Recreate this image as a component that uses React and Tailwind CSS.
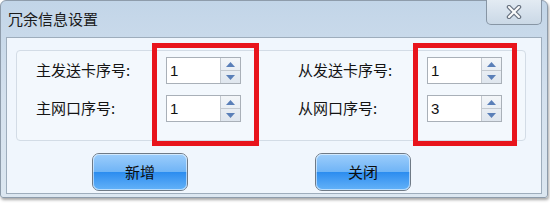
import React from 'react';

function SpinBox({ value }) {
  return (
    <div className="flex h-[27px] w-[75px] border border-[#a9b0b8] bg-white">
      <div
        className="flex-1 pl-[3px] text-[15px] leading-[25px] text-[#111]"
        style={{ fontFamily: '"Liberation Sans", sans-serif' }}
      >
        {value}
      </div>
      <div className="flex w-[20px] flex-col border-l border-[#c3c9d0] bg-gradient-to-b from-[#f3f6f9] to-[#dfe6ee]">
        <div className="flex flex-1 items-center justify-center border-b border-[#c3c9d0]">
          <svg width="9" height="5" viewBox="0 0 9 5">
            <path d="M0 5 L4.5 0 L9 5 Z" fill="#5a7fb8" />
          </svg>
        </div>
        <div className="flex flex-1 items-center justify-center">
          <svg width="9" height="5" viewBox="0 0 9 5">
            <path d="M0 0 L4.5 5 L9 0 Z" fill="#5a7fb8" />
          </svg>
        </div>
      </div>
    </div>
  );
}

function AeroButton({ children }) {
  return (
    <button className="relative h-[38px] w-[96px] overflow-hidden rounded-[7px] border-[1.5px] border-[#6f7a86] text-[15px] text-[#0d0d0d]">
      <span className="absolute inset-x-0 top-0 h-1/2 bg-gradient-to-b from-[#9ccdfb] to-[#6fb4f6]" />
      <span className="absolute inset-x-0 bottom-0 h-1/2 bg-gradient-to-b from-[#2a8cef] to-[#63b2f8]" />
      <span className="absolute inset-0 rounded-[6px] shadow-[inset_0_0_0_1px_rgba(255,255,255,0.55)]" />
      <span className="relative z-10">{children}</span>
    </button>
  );
}

export default function App() {
  return (
    <div
      className="relative h-[216px] w-[550px] overflow-hidden bg-white"
      style={{ fontFamily: '"Noto Sans CJK SC", "Noto Sans", sans-serif' }}
    >
      {/* window frame */}
      <div className="relative flex h-[198px] w-[548px] flex-col rounded-t-[6px] rounded-b-[3px] border border-[#8e9cab] bg-gradient-to-b from-[#c2d5e8] via-[#d4e1ee] to-[#dce7f1] shadow-[1px_2px_3px_rgba(0,0,0,0.35)]">
        {/* title bar */}
        <div className="flex h-[36px] items-center pl-[7px] text-[15px] text-[#1b1b1b]">冗余信息设置</div>

        <div className="absolute right-[5px] top-[-1px] flex h-[25px] w-[56px] items-center justify-center rounded-b-[5px] border border-t-0 border-[#8795a4] bg-gradient-to-b from-[#e3ebf3] to-[#cad8e6]">
          <svg width="16" height="14" viewBox="0 0 16 14">
            <path d="M3 2 L13 12 M13 2 L3 12" stroke="#6a7482" strokeWidth="4.5" strokeLinecap="round" />
            <path d="M3 2 L13 12 M13 2 L3 12" stroke="#fdfdfd" strokeWidth="2" strokeLinecap="round" />
          </svg>
        </div>

        {/* client area */}
        <div className="mx-[5px] flex h-[157px] flex-col border border-[#9eadbc] bg-[#f0f6fd] pl-[9px] pr-[15px] pt-[12px]">
          {/* group box */}
          <div className="flex h-[91px] flex-col gap-[11px] rounded-[4px] border border-[#d3dce6] bg-[#f3f8fd] pl-[19px] pt-[6px]">
            <div className="flex items-center">
              <div className="w-[130px] text-[15px] text-[#141414]">主发送卡序号:</div>
              <SpinBox value="1" />
              <div className="ml-[57px] w-[129px] text-[15px] text-[#141414]">从发送卡序号:</div>
              <SpinBox value="1" />
            </div>
            <div className="flex items-center">
              <div className="w-[130px] text-[15px] text-[#141414]">主网口序号:</div>
              <SpinBox value="1" />
              <div className="ml-[57px] w-[129px] text-[15px] text-[#141414]">从网口序号:</div>
              <SpinBox value="3" />
            </div>
          </div>

          {/* buttons */}
          <div className="mt-[12px] flex pl-[76px]">
            <AeroButton>新增</AeroButton>
            <div className="ml-[127px]">
              <AeroButton>关闭</AeroButton>
            </div>
          </div>
        </div>
      </div>

      {/* red annotation boxes */}
      <div className="absolute left-[152px] top-[43px] h-[103px] w-[107px] border-[5px] border-[#e8141c]" />
      <div className="absolute left-[413px] top-[43px] h-[103px] w-[104px] border-[5px] border-[#e8141c]" />
    </div>
  );
}
